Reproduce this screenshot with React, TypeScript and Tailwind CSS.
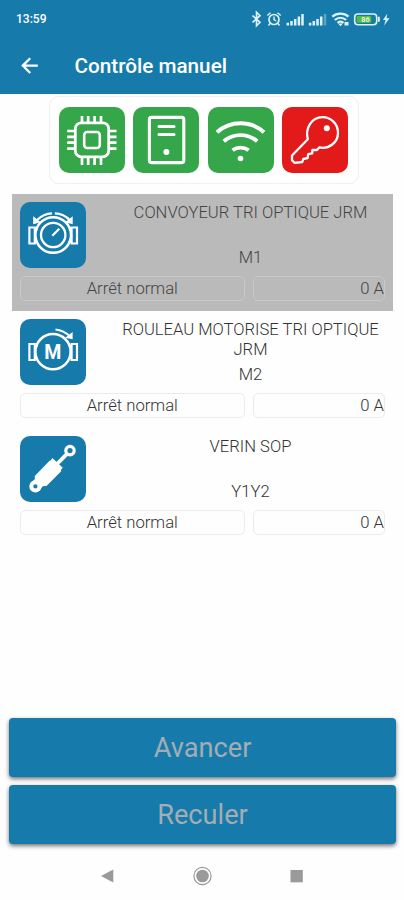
import React from 'react'
import clsx from 'clsx'

interface TileProps {
  color: 'green' | 'red' | 'blue'
  children: React.ReactNode
}

const Tile = ({ color, children }: TileProps) => (
  <svg
    viewBox="0 0 66 66"
    fill="none"
    stroke="white"
    strokeLinecap="round"
    strokeLinejoin="round"
    className={clsx(
      'size-[66px] shrink-0 rounded-[10px]',
      color === 'green' && 'bg-[#35a64a]',
      color === 'red' && 'bg-[#e31a1a]',
      color === 'blue' && 'bg-[#167bab]'
    )}
  >
    {children}
  </svg>
)

const ChipTile = () => (
  <Tile color="green">
    <rect x="16.3" y="15.8" width="33.4" height="34" rx="6" strokeWidth="2.8" />
    <rect x="25.2" y="25" width="15.6" height="16" rx="3" strokeWidth="2.6" />
    <path
      strokeWidth="2.7"
      strokeLinecap="butt"
      d="M23 9v7M29.2 9v7M35.6 9v7M42 9v7M23 50v8M29.2 50v8M35.6 50v8M42 50v8M8.2 24h8M8.2 29.8h8M8.2 35.7h8M8.2 41.6h8M50 24h7.5M50 29.8h7.5M50 35.7h7.5M50 41.6h7.5"
    />
  </Tile>
)

const ServerTile = () => (
  <Tile color="green">
    <rect x="16.4" y="10.4" width="34.4" height="45.2" rx="2" strokeWidth="3.1" />
    <path strokeWidth="3" d="M26 19.6h15M26 27.6h15" />
    <circle cx="33.4" cy="45" r="3" fill="white" stroke="none" />
  </Tile>
)

const WifiTile = () => (
  <Tile color="green">
    <path
      strokeWidth="3.9"
      strokeLinecap="butt"
      d="M9 25.3C22 13.2 43 13.2 56 25.3M15.8 34.3C25 26 40 26 49.2 34.3M24.6 43.2C29 39.8 36 39.8 40.6 43.2"
    />
    <circle cx="32.5" cy="51.5" r="2.8" fill="white" stroke="none" />
  </Tile>
)

const KeyTile = () => (
  <Tile color="red">
    <path
      strokeWidth="2.3"
      d="M25.8 32.2C23 22 29 10.2 40.5 10.2C49 10.2 56 17 56 25.7C56 35.5 47 42.5 37.2 40.4L35 43L30.4 43L30.2 46.4L26.2 47.2L25.6 51.2L21.3 52L20.3 55L12.4 55.8L10 53.2V48.5Z"
    />
    <circle cx="44.8" cy="21.3" r="3" fill="white" stroke="none" />
  </Tile>
)

const GaugeTile = () => (
  <Tile color="blue">
    <circle cx="33.2" cy="33" r="17.8" strokeWidth="2.5" />
    <circle cx="33.2" cy="33" r="12.2" strokeWidth="2.3" />
    <path strokeWidth="2.2" strokeLinecap="butt" d="M32.3 33.7L39.3 26.7" />
    <path
      strokeWidth="2.2"
      strokeLinejoin="miter"
      d="M9.4 25.5h5.4v16H9.4zM51.6 25.5h5.4v16h-5.4zM14.8 27.5h2M14.8 39.5h2M49.6 27.5h2M49.6 39.5h2"
    />
    <path strokeWidth="2.2" strokeLinecap="butt" d="M16.5 18.5C21 14 26 11.5 32 11.4M34.8 11.4C41 11.5 46 14 50 18.5" />
    <path fill="white" stroke="none" d="M13.2 14.3V22.2L20.8 20.2ZM52.7 14.3V22.2L45.2 20.2Z" />
  </Tile>
)

const MotorTile = () => (
  <Tile color="blue">
    <circle cx="33" cy="32.7" r="17.6" strokeWidth="2.5" />
    <path
      strokeWidth="2.2"
      strokeLinejoin="miter"
      d="M9.4 25h5.4v16H9.4zM51.6 25h5.4v16h-5.4zM14.8 27h2M14.8 39h2M49.6 27h2M49.6 39h2"
    />
    <path strokeWidth="2.2" strokeLinecap="butt" d="M35.5 10.5C41.5 11 46 13.5 50 17.5" />
    <path fill="white" stroke="none" d="M52.6 13V20.2L45.2 18.8Z" />
    <text
      x="32.8"
      y="39.6"
      textAnchor="middle"
      fill="white"
      stroke="none"
      className="font-[Roboto,sans-serif] text-[19.5px] font-bold"
    >
      M
    </text>
  </Tile>
)

const CylinderTile = () => (
  <Tile color="blue">
    <path strokeWidth="3.8" d="M46.5 18.3L37 28" />
    <path
      fill="white"
      stroke="none"
      d="M32.3 22L42.8 31.8L40.8 34L41.2 35.2L26.5 50L22.6 50.2L19.5 54.5L10.5 47L14.8 43.2L14.8 40L29.8 24.6L30.8 24.4Z"
    />
    <circle cx="50" cy="14.6" r="4.2" strokeWidth="3.2" />
    <circle cx="15.4" cy="50.4" r="4.1" strokeWidth="4" fill="#167bab" />
  </Tile>
)

const StatusIcons = () => (
  <svg viewBox="0 0 138 18" className="h-[18px] w-[138px]" fill="none" stroke="#dff1fa">
    <g transform="translate(-1.5 0)">
      <path strokeWidth="1.6" d="M2 5.5L9.5 12.3L6 15.8V2.2L9.5 5.7L2 12.5" />
      <circle cx="23.5" cy="9.5" r="5" strokeWidth="1.7" />
      <path strokeWidth="1.4" d="M23.5 6.5V9.7L25.7 11M16.8 5.5L20 2.7M30.2 5.5L27 2.7M19.5 13.5L18 15.5M27.5 13.5L29 15.5" />
      <path strokeWidth="2.5" d="M37.3 15.5V12.8M41 15.5V11M44.7 15.5V9M48.4 15.5V6.5M52 15.5V4" />
      <path strokeWidth="2.5" d="M59.6 15.5V12.8M63.3 15.5V11M67 15.5V9M70.7 15.5V6.5" />
      <path strokeWidth="2.5" strokeOpacity="0.35" d="M74.5 15.5V4" />
      <path strokeWidth="2.2" d="M81.8 6.6C86.5 2.6 93.5 2.6 98 6.6M84.3 10C87.5 7 92.5 7 95.6 10M87 12.8C88.8 11.4 91.2 11.4 93 12.8" />
      <path fill="#dff1fa" stroke="none" d="M87.5 13.5H92.5L90 16.3ZM94 12H98V15.5H94Z" />
    </g>
    <rect x="102.7" y="4" width="22" height="10.8" rx="3.2" strokeWidth="1.6" />
    <rect x="104.7" y="6" width="14.5" height="6.8" rx="1.2" fill="#55bd3c" stroke="none" />
    <path fill="#dff1fa" stroke="none" d="M126 6.8H127.8V11.8H126ZM135.2 3.8L131 10H133.6L132 15.4L137.6 8.3H134.6Z" />
    <text x="113.5" y="12.2" textAnchor="middle" fill="#e3f6dc" stroke="none" className="font-[Roboto,sans-serif] text-[7.5px] font-bold">
      86
    </text>
  </svg>
)

const Header = () => (
  <header className="h-[94px] bg-[#167bab] text-white">
    <div className="flex h-[38px] items-center justify-between pr-[14px] pl-4 text-[12px] font-medium">
      <span>13:59</span>
      <StatusIcons />
    </div>
    <div className="flex h-[56px] items-center pl-[21px]">
      <svg viewBox="0 0 18 18" className="size-[18px]" fill="none" stroke="white" strokeWidth="2.3">
        <path d="M16.8 8.6H2M9.2 1.2L1.8 8.6L9.2 16" />
      </svg>
      <h1 className="ml-[35.5px] pt-0.5 text-[20.7px] font-medium">Contrôle manuel</h1>
    </div>
  </header>
)

const Field = ({ selected, className, children }: { selected?: boolean; className: string; children: React.ReactNode }) => (
  <div
    className={clsx(
      'h-[25px] rounded-[5px] border text-[16.7px] leading-[23px]',
      selected ? 'border-[#c9c9c9]' : 'border-[#ebebeb]',
      className
    )}
  >
    {children}
  </div>
)

interface DeviceProps {
  icon: React.ReactNode
  name: string
  code: string
  selected?: boolean
}

const Device = ({ icon, name, code, selected }: DeviceProps) => (
  <li
    className={clsx(
      'h-[117.3px] px-2 pt-2 font-light',
      selected ? 'bg-[#bababa] text-[#444444]' : 'text-[#333333]'
    )}
  >
    <div className="flex h-[66px]">
      {icon}
      <div className="ml-[30px] flex flex-1 flex-col justify-between pt-px text-center text-[16.6px] leading-5">
        <p>{name}</p>
        <p>{code}</p>
      </div>
    </div>
    <div className="mt-2 flex gap-2">
      <Field selected={selected} className="w-[224.5px] text-center">
        Arrêt normal
      </Field>
      <Field selected={selected} className="flex-1 text-right">
        0 A
      </Field>
    </div>
  </li>
)

const ActionButton = ({ children }: { children: React.ReactNode }) => (
  <button className="h-[58.5px] rounded-[4px] bg-[#167bab] pt-0.5 text-[27.2px] text-[#a3adb3] shadow-[0_2px_4px_rgba(0,0,0,0.55)]">
    {children}
  </button>
)

const NavBar = () => (
  <nav className="mt-[21px] flex items-center pl-[101px]">
    <svg viewBox="0 0 203 22" className="h-[22px] w-[203px]">
      <path fill="#9a9a9a" d="M0 11L12.3 4.5V17.5Z" />
      <circle cx="101.5" cy="11" r="8.6" fill="none" stroke="#9a9a9a" strokeWidth="1.2" />
      <circle cx="101.5" cy="11" r="6.3" fill="#9a9a9a" />
      <rect x="189.5" y="5" width="12.3" height="12.3" fill="#9a9a9a" />
    </svg>
  </nav>
)

export default function App() {
  return (
    <div className="flex h-[900px] w-[404px] flex-col overflow-hidden bg-[#fefefe] font-[Roboto,sans-serif]">
      <Header />
      <div className="mt-[2px] ml-[48.5px] flex h-[88px] w-[310px] items-center justify-center gap-[8.2px] rounded-[10px] border border-[#efefef] bg-white">
        <ChipTile />
        <ServerTile />
        <WifiTile />
        <KeyTile />
      </div>
      <ul className="mt-[9.5px] mr-[11px] ml-3">
        <Device selected icon={<GaugeTile />} name="CONVOYEUR TRI OPTIQUE JRM" code="M1" />
        <Device icon={<MotorTile />} name="ROULEAU MOTORISE TRI OPTIQUE JRM" code="M2" />
        <Device icon={<CylinderTile />} name="VERIN SOP" code="Y1Y2" />
      </ul>
      <div className="mt-auto flex h-[182px] flex-col">
        <div className="mr-[8px] ml-[9px] flex flex-col gap-[8.5px]">
          <ActionButton>Avancer</ActionButton>
          <ActionButton>Reculer</ActionButton>
        </div>
        <NavBar />
      </div>
    </div>
  )
}
